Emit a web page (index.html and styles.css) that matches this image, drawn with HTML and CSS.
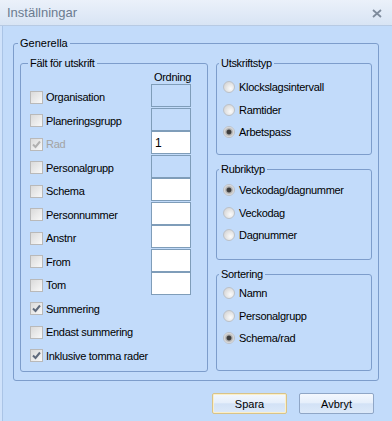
FILE: index.html
```html
<!DOCTYPE html>
<html lang="sv">
<head>
<meta charset="utf-8">
<title>Inställningar</title>
<link rel="stylesheet" href="styles.css">
</head>
<body>
<div class="titlebar">
  <span class="title">Inställningar</span>
  <svg class="close" width="10" height="9" viewBox="0 0 10 9"><path d="M1 1 L9 8 M9 1 L1 8" stroke="#7e8b9c" stroke-width="1.8"/></svg>
</div>
<div class="main">
  <fieldset class="group outer">
    <legend>Generella</legend>
    <div class="columns">
      <fieldset class="group fields">
        <legend>Fält för utskrift</legend>
        <div class="hdr"><span></span><span class="ordning">Ordning</span></div>
        <div class="row"><label class="chk"><span class="cb"></span>Organisation</label><span class="num blue"></span></div>
        <div class="row"><label class="chk"><span class="cb"></span>Planeringsgrupp</label><span class="num blue"></span></div>
        <div class="row"><label class="chk disabled"><span class="cb"><svg width="11" height="11" viewBox="0 0 11 11"><path d="M2 5.5 L4.5 8 L9 2.5" fill="none" stroke="#b0b0b0" stroke-width="2"/></svg></span>Rad</label><span class="num">1</span></div>
        <div class="row"><label class="chk"><span class="cb"></span>Personalgrupp</label><span class="num blue"></span></div>
        <div class="row"><label class="chk"><span class="cb"></span>Schema</label><span class="num"></span></div>
        <div class="row"><label class="chk"><span class="cb"></span>Personnummer</label><span class="num"></span></div>
        <div class="row"><label class="chk"><span class="cb"></span>Anstnr</label><span class="num"></span></div>
        <div class="row"><label class="chk"><span class="cb"></span>From</label><span class="num"></span></div>
        <div class="row"><label class="chk"><span class="cb"></span>Tom</label><span class="num"></span></div>
        <div class="row"><label class="chk"><span class="cb"><svg width="11" height="11" viewBox="0 0 11 11"><path d="M2 5.5 L4.5 8 L9 2.5" fill="none" stroke="#5f6a7c" stroke-width="2"/></svg></span>Summering</label></div>
        <div class="row"><label class="chk"><span class="cb"></span>Endast summering</label></div>
        <div class="row"><label class="chk"><span class="cb"><svg width="11" height="11" viewBox="0 0 11 11"><path d="M2 5.5 L4.5 8 L9 2.5" fill="none" stroke="#5f6a7c" stroke-width="2"/></svg></span>Inklusive tomma rader</label></div>
      </fieldset>
      <div class="rightcol">
        <fieldset class="group opts utskr">
          <legend>Utskriftstyp</legend>
          <label class="radio"><span class="rb"></span>Klockslagsintervall</label>
          <label class="radio"><span class="rb"></span>Ramtider</label>
          <label class="radio"><span class="rb on"></span>Arbetspass</label>
        </fieldset>
        <fieldset class="group opts rubrik">
          <legend>Rubriktyp</legend>
          <label class="radio"><span class="rb on"></span>Veckodag/dagnummer</label>
          <label class="radio"><span class="rb"></span>Veckodag</label>
          <label class="radio"><span class="rb"></span>Dagnummer</label>
        </fieldset>
        <fieldset class="group opts sort">
          <legend>Sortering</legend>
          <label class="radio"><span class="rb"></span>Namn</label>
          <label class="radio"><span class="rb"></span>Personalgrupp</label>
          <label class="radio"><span class="rb on"></span>Schema/rad</label>
        </fieldset>
      </div>
    </div>
  </fieldset>
  <div class="buttons">
    <button class="btn default">Spara</button>
    <button class="btn">Avbryt</button>
  </div>
</div>
</body>
</html>
```
FILE: styles.css
```css
html, body {
  margin: 0;
  padding: 0;
}
body {
  width: 392px;
  height: 421px;
  overflow: hidden;
  background: #c2dbfa;
  font-family: "Liberation Sans", Arial, sans-serif;
  font-size: 11px;
  letter-spacing: -0.3px;
  color: #000;
  box-shadow: inset 2px 0 0 #cfe2fb, inset 3px 0 0 #aac4e6;
}
.titlebar {
  height: 25px;
  border-bottom: 1px solid #b7cae3;
  background: linear-gradient(#ebf1fa, #d8e4f4);
  display: flex;
  align-items: center;
  justify-content: space-between;
  padding: 0 10px 0 7px;
}
.title {
  font-size: 13px;
  letter-spacing: 0;
  color: #6b7b90;
}
.close {
  display: block;
  margin-top: 1px;
}
.main {
  padding: 10px 0 0 13px;
}
fieldset.group {
  margin: 0;
  border: 1px solid #7d9dcb;
  border-radius: 3px;
  box-sizing: border-box;
  min-width: 0;
}
fieldset.group > legend {
  padding: 0 2px;
  line-height: 14px;
  font-size: 11px;
}
.outer {
  width: 366px;
  height: 345px;
  padding: 6px 6px 0 6px;
}
.outer > legend {
  font-size: 13px;
  letter-spacing: 0;
  margin-left: -2px;
}
.columns {
  display: grid;
  grid-template-columns: 188px 156px;
  column-gap: 8px;
}
.fields {
  height: 316px;
  padding: 0 0 0 9px;
}
.fields > legend {
  margin-left: -2px;
}
.hdr {
  display: grid;
  grid-template-columns: 121px 40px;
  height: 14px;
  line-height: 14px;
}
.ordning {
  padding-left: 3px;
  white-space: nowrap;
}
.row {
  display: grid;
  grid-template-columns: 121px 40px;
  height: 23.5px;
}
.chk {
  display: flex;
  align-items: center;
  gap: 3px;
  padding-top: 3px;
  white-space: nowrap;
}
.chk.disabled {
  color: #a3a3a3;
}
.cb {
  width: 13px;
  height: 13px;
  box-sizing: border-box;
  border: 1px solid #b9b9b9;
  background: linear-gradient(135deg, #dadada, #f8f8f8);
  display: flex;
  align-items: center;
  justify-content: center;
  flex: none;
}
.cb svg {
  display: block;
}
.num {
  height: 23px;
  box-sizing: border-box;
  border: 1px solid #7f9db9;
  background: #fff;
  font-size: 12px;
  letter-spacing: 0;
  padding: 4px 0 0 3px;
}
.num.blue {
  background: transparent;
}
.rightcol {
  display: flex;
  flex-direction: column;
  gap: 7px;
}
.opts {
  padding: 0 0 0 6px;
}
.opts > legend {
  margin-left: -4px;
}
.utskr {
  height: 99px;
  padding-top: 6px;
}
.rubrik {
  height: 98px;
  padding-top: 3px;
}
.sort {
  height: 104px;
  padding-top: 1px;
}
.radio {
  display: flex;
  align-items: center;
  gap: 4px;
  height: 22.5px;
  white-space: nowrap;
}
.rb {
  width: 12px;
  height: 12px;
  box-sizing: border-box;
  border-radius: 50%;
  border: 1px solid #bcc1c8;
  background: radial-gradient(circle at 65% 65%, #fbfbfb 0, #e6e6e6 45%, #cdcdcd 100%);
  flex: none;
}
.rb.on {
  background: radial-gradient(circle at 50% 50%, #3c3c3c 0, #3c3c3c 2px, #a5a5a5 2.8px, #e6e6e6 5px, #f4f4f4 100%);
}
.buttons {
  display: flex;
  justify-content: flex-end;
  gap: 12px;
  padding: 12px 18px 0 0;
}
.btn {
  width: 75px;
  height: 21px;
  box-sizing: border-box;
  padding: 0;
  border: 1px solid #8fa6c6;
  border-radius: 2px;
  background: linear-gradient(#f4f8fe 0%, #e6effb 45%, #d3e2f6 52%, #dce9f9 100%);
  font-family: "Liberation Sans", Arial, sans-serif;
  font-size: 11px;
  color: #000;
}
.btn.default {
  border-color: #d8c389;
  box-shadow: inset 0 0 0 1px #fbefc8;
}
```
